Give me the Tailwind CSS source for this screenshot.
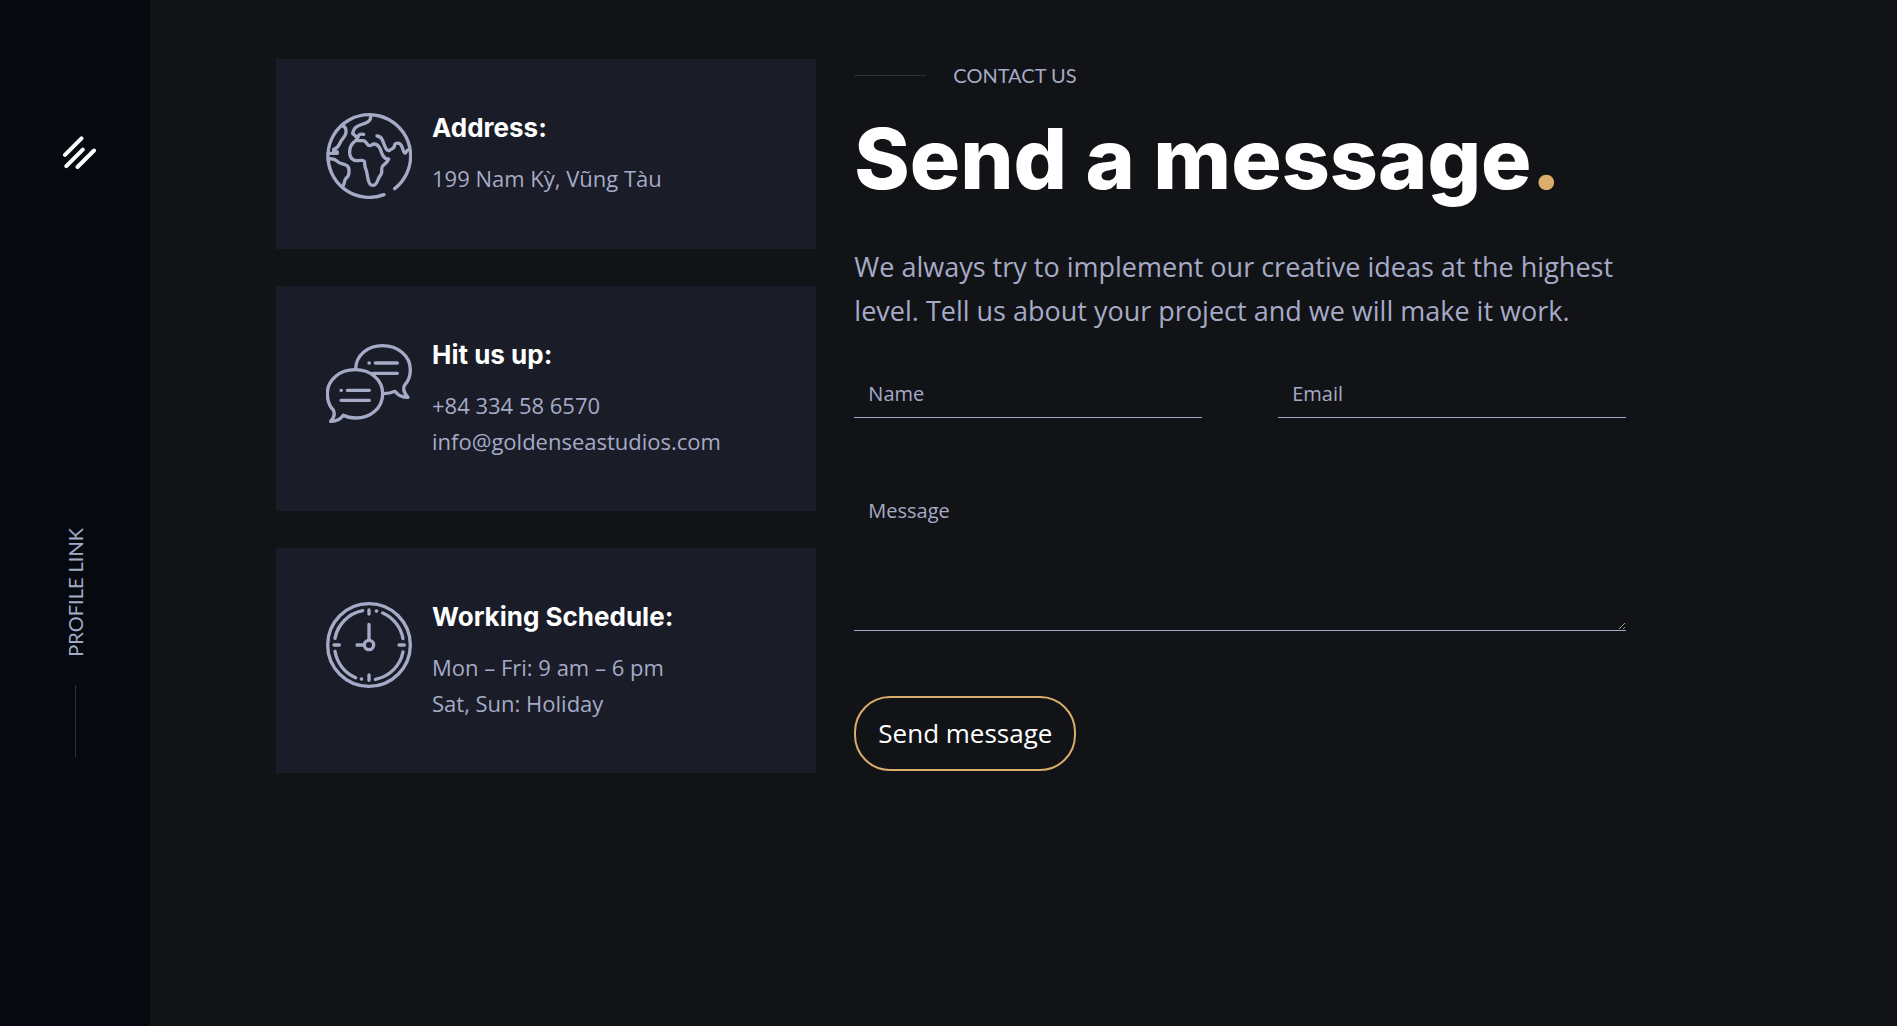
<!DOCTYPE html>
<html lang="en">
<head>
  <meta charset="UTF-8" />
  <meta name="viewport" content="width=device-width, initial-scale=1.0" />
  <title>Contact us</title>
  <script src="https://cdn.jsdelivr.net/npm/@tailwindcss/browser@4"></script>
</head>
<body class="flex min-h-screen bg-[#121317] text-[#a5abc6] font-['Open_Sans',sans-serif]">

  <!-- Sidebar -->
  <aside class="flex w-[150px] shrink-0 flex-col items-center bg-[#060910] pt-[136px]">
    <a href="#" aria-label="Home" class="ml-2">
      <svg class="size-[33px]" viewBox="189 77 100 100" fill="none" stroke="#fff" stroke-width="12" stroke-linecap="round">
        <path d="M195 134 245 84M199 168 249 118M233 171 283 121" />
      </svg>
    </a>
    <div class="mt-[359px] flex flex-col items-center gap-7">
      <a href="#" class="rotate-180 text-[20px] leading-6 uppercase font-['Lato',sans-serif] [writing-mode:vertical-rl]">Profile link</a>
      <span class="h-[72px] w-px bg-[#2f323c]"></span>
    </div>
  </aside>

  <!-- Contact section -->
  <main class="flex-1 pt-[59px] pb-16 pl-[126px]">
    <div class="grid max-w-[1350px] grid-cols-12 gap-[38px]">

      <div class="col-span-5 flex flex-col gap-[37px]">
        <section class="flex gap-5 bg-[#1a1c27] p-[50px]">
          <svg class="mt-1 size-[86px] shrink-0" viewBox="48 39 258 258" fill="none" stroke="currentColor" stroke-width="10" stroke-linecap="round" stroke-linejoin="round">
            <path d="M222 284A124 124 0 1 1 254 266" />
            <path d="M182 46C183 57 177 66 165 70 153 74 143 76 135 84 130 90 129 96 128 101 133 104 138 109 141 115" />
            <path d="M161 103C151 101 145 104 144 112 142 119 138 121 132 126 122 134 118 146 119 161 121 174 129 182 142 182 151 182 160 178 163 184 165 191 163 198 167 206 172 217 172 230 175 241 178 253 182 256 188 256 196 256 201 248 204 239 207 229 214 226 215 217 216 209 213 204 218 198 226 191 233 186 236 177 229 178 223 174 219 167 214 159 213 150 208 142 203 135 199 131 192 132 186 133 182 139 175 136 170 131 168 124 161 122 152 121 147 124 139 120" />
            <path d="M201 108C209 109 214 112 217 120 221 129 223 136 227 144 231 151 234 154 240 150 245 147 253 145 253 138 253 132 259 128 267 130 275 133 277 141 279 149 281 155 284 160 286 159 289 157 290 147 299 149" />
            <path d="M97 77C106 80 109 87 108 97 107 109 96 117 91 127 86 136 84 145 71 148L71 154 82 156 82 160 54 160" />
            <path d="M54 178C66 174 74 177 82 184 90 192 101 191 111 197 118 202 118 212 116 223 115 232 108 232 105 240 102 248 103 255 97 261" />
          </svg>
          <div class="pb-0.5">
            <h2 class="mb-[14px] text-[26px] leading-[37px] font-bold text-white font-['Inter',sans-serif]">Address:</h2>
            <p class="text-[22px] leading-9">199 Nam Kỳ, Vũng Tàu</p>
          </div>
        </section>

        <section class="flex gap-5 bg-[#1a1c27] p-[50px]">
          <svg class="mt-1 size-[86px] shrink-0" viewBox="48 30 258 258" fill="none" stroke="currentColor" stroke-width="10" stroke-linecap="round" stroke-linejoin="round">
            <path d="M62 274C73 262 76 252 70 240 59 229 52 211 52 191 52 149 89 119 135 119 182 119 218 149 218 191 218 234 182 264 137 264 123 264 111 262 100 256 91 268 78 275 62 274Z" />
            <path d="M137 118C137 76 173 47 217 47 264 47 301 78 301 119 301 139 294 154 284 165 276 178 283 190 294 202 278 203 266 199 255 184 244 189 233 191 220 191" />
            <path d="M93 181H94M112 181H178M93 211H178M177 99H178M196 99H262M188 130H262" />
          </svg>
          <div class="pb-0.5">
            <h2 class="mb-[14px] text-[26px] leading-[37px] font-bold text-white font-['Inter',sans-serif]">Hit us up:</h2>
            <p class="text-[22px] leading-9">+84 334 58 6570<br /><a href="mailto:info@goldenseastudios.com">info@goldenseastudios.com</a></p>
          </div>
        </section>

        <section class="flex gap-5 bg-[#1a1c27] p-[50px]">
          <svg class="mt-1 size-[86px] shrink-0" viewBox="48 37 258 258" fill="none" stroke="currentColor" stroke-width="10" stroke-linecap="round">
            <circle cx="177" cy="166" r="124" />
            <circle cx="177" cy="166" r="14" />
            <path d="M177 104V150M141 166H161" />
            <path d="M177 61V73M177 256V272M72 166H88M267 166H283M199 64H200M154 268H155" />
            <path d="M75 146A104 104 0 0 1 158 63M218 70A104 104 0 0 1 279 147M75 185A104 104 0 0 0 137 264M279 187A104 104 0 0 1 196 269" />
          </svg>
          <div class="pb-0.5">
            <h2 class="mb-[14px] text-[26px] leading-[37px] font-bold text-white font-['Inter',sans-serif]">Working Schedule:</h2>
            <p class="text-[22px] leading-9">Mon – Fri: 9 am – 6 pm<br />Sat, Sun: Holiday</p>
          </div>
        </section>
      </div>

      <div class="col-span-7">
        <div class="flex items-center gap-[27px]">
          <span class="h-px w-[72px] bg-[#2f323c]"></span>
          <span class="text-[20px] leading-8 uppercase font-['Lato',sans-serif]">Contact us</span>
        </div>
        <h1 class="mt-[18px] text-[84px] leading-[100px] font-extrabold text-white font-['Inter',sans-serif]">Send a message<span class="text-[#dbae6c]">.</span></h1>
        <p class="mt-9 text-[27px] leading-[44px]">We always try to implement our creative ideas at the highest level. Tell us about your project and we will make it work.</p>

        <form class="mt-9">
          <div class="grid grid-cols-2 gap-[76px]">
            <input type="text" name="name" aria-label="Name" placeholder="Name" class="h-[49px] w-full border-b border-[#a5abc6] px-[14px] text-[20px] outline-none placeholder:text-[#a5abc6]" />
            <input type="email" name="email" aria-label="Email" placeholder="Email" class="h-[49px] w-full border-b border-[#a5abc6] px-[14px] text-[20px] outline-none placeholder:text-[#a5abc6]" />
          </div>
          <textarea name="message" aria-label="Message" placeholder="Message" class="mt-16 block h-[149px] w-full border-b border-[#a5abc6] px-[14px] py-[14px] text-[20px] leading-[30px] outline-none placeholder:text-[#a5abc6]"></textarea>
          <button type="submit" class="mt-[65px] h-[75px] rounded-[36px] border-2 border-[#dbae6c] px-[22px] text-[26px] text-white">Send message</button>
        </form>
      </div>

    </div>
  </main>
</body>
</html>
